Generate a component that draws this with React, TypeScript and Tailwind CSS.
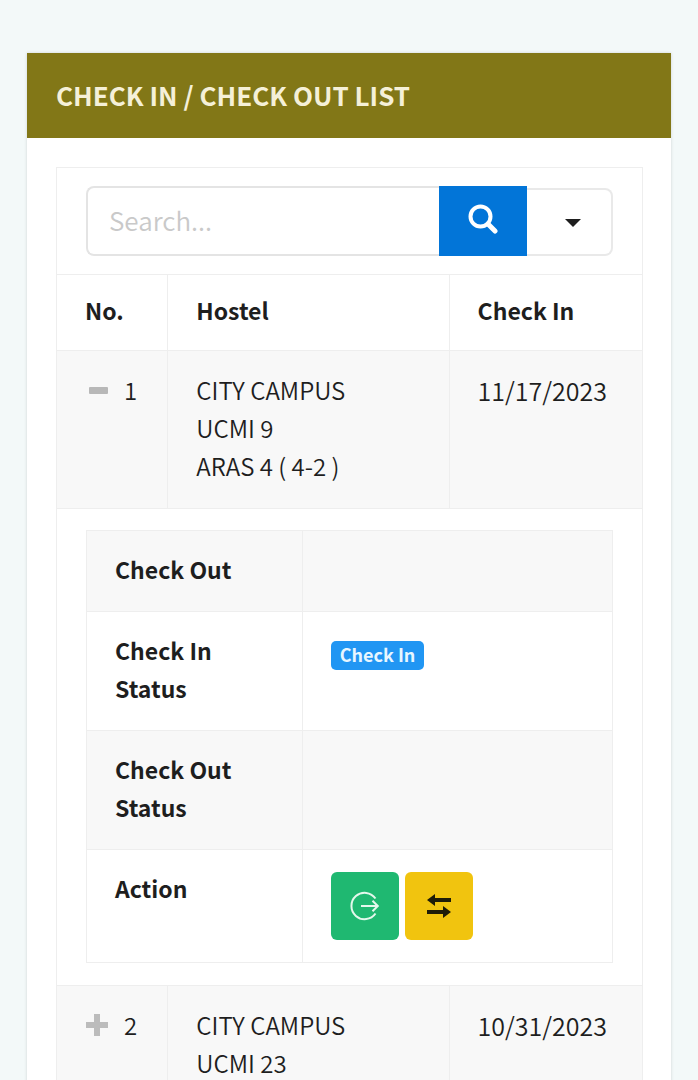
function SearchIcon() {
  return (
    <svg viewBox="0 0 30 30" className="size-[30px]" fill="none" stroke="currentColor" aria-hidden="true">
      <circle cx="12.5" cy="12.5" r="10" strokeWidth="4" />
      <path d="M20 20l7 7" strokeWidth="5" strokeLinecap="round" />
    </svg>
  );
}

function MinusIcon() {
  return (
    <svg viewBox="0 0 24 24" className="size-6 shrink-0" fill="#b8b8b8" aria-hidden="true">
      <rect x="4" y="9" width="19" height="7" rx="1" />
    </svg>
  );
}

function PlusIcon() {
  return (
    <svg viewBox="0 0 24 24" className="size-6 shrink-0" fill="#bcbcbc" aria-hidden="true">
      <path d="M9 1h6v8h8v6h-8v8H9v-8H1V9h8z" />
    </svg>
  );
}

function LeaveIcon() {
  return (
    <svg viewBox="0 0 30 30" className="size-[30px]" fill="none" stroke="#e4f8ec" strokeWidth="2" aria-hidden="true">
      <path d="M25.5 7.5A13.2 13.2 0 1 0 25.5 22.5" />
      <path d="M11 15h17M22.5 9.8l5.3 5.2-5.3 5.2" />
    </svg>
  );
}

function SwapIcon() {
  return (
    <svg viewBox="0 0 24 24" className="size-6" fill="#1f1c08" aria-hidden="true">
      <path d="M0 6l8-6v4h16v4H8v4z" />
      <path d="M24 18l-8-6v4H0v4h16v4z" />
    </svg>
  );
}

const line = "border border-[#eeeeee]";
const cell = "border border-[#eeeeee] px-7 pt-5 pb-[23px] text-left align-top";
const headCell = "border border-[#eeeeee] px-7 pt-4 pb-[21px] text-left text-[23px]";
const detailCell = "border border-[#eeeeee] px-7 py-[21px] text-left align-top";
const detailHead = "border border-[#eeeeee] px-7 pt-[19px] pb-[23px] text-left align-top text-[23px] font-bold";

type Stay = { no: number; lines: string[]; date: string; open: boolean };

function StayRow({ stay }: { stay: Stay }) {
  return (
    <tr className="bg-[#f8f8f8]">
      <td className={cell}>
        <button
          type="button"
          aria-label={stay.open ? "Collapse row" : "Expand row"}
          className="flex h-[38px] items-center gap-[15px]"
        >
          {stay.open ? <MinusIcon /> : <PlusIcon />}
          <span>{stay.no}</span>
        </button>
      </td>
      <td className={cell}>
        {stay.lines.map((text) => (
          <div key={text}>{text}</div>
        ))}
      </td>
      <td className={`${cell} text-[25px]`}>{stay.date}</td>
    </tr>
  );
}

function Details() {
  return (
    <table className="w-full table-fixed border-collapse">
      <colgroup>
        <col className="w-[41%]" />
        <col />
      </colgroup>
      <tbody>
        <tr className="bg-[#f8f8f8]">
          <th scope="row" className={detailHead}>Check Out</th>
          <td className={detailCell} />
        </tr>
        <tr>
          <th scope="row" className={detailHead}>Check In<br />Status</th>
          <td className={detailCell}>
            <span className="mt-2 block h-[29px] w-fit rounded-[5px] bg-[#2196f3] px-[9px] text-[18px] leading-[27px] font-bold text-[#e8f6ff]">
              Check In
            </span>
          </td>
        </tr>
        <tr className="bg-[#f8f8f8]">
          <th scope="row" className={detailHead}>Check Out<br />Status</th>
          <td className={detailCell} />
        </tr>
        <tr>
          <th scope="row" className={detailHead}>Action</th>
          <td className={`${line} px-7 py-[22px] align-top`}>
            <div className="flex gap-1.5">
              <button type="button" aria-label="Check out" className="grid size-[68px] place-items-center rounded-md bg-[#1fb871]">
                <LeaveIcon />
              </button>
              <button type="button" aria-label="Transfer" className="grid size-[68px] place-items-center rounded-md bg-[#f1c40f]">
                <SwapIcon />
              </button>
            </div>
          </td>
        </tr>
      </tbody>
    </table>
  );
}

export default function App() {
  return (
    <main className="h-screen overflow-hidden bg-[#f3f9f9] px-[27px] pt-[53px] font-['Noto_Sans_CJK_JP',sans-serif] text-[#1e1e1e]">
      <section className="min-h-full bg-white shadow-[0_0_3px_rgba(0,0,0,0.15)]">
        <header className="flex h-[85px] items-center bg-[#827717] px-[29px] pb-0.5">
          <h1 className="text-[26px] font-bold text-[#f5f0d8]">CHECK IN / CHECK OUT LIST</h1>
        </header>
        <div className="py-[29px] pr-7 pl-[29px]">
          <table className="w-full table-fixed border-collapse text-[24px] leading-[38px] font-[350]">
            <colgroup>
              <col className="w-[19%]" />
              <col className="w-[48%]" />
              <col className="w-[33%]" />
            </colgroup>
            <thead>
              <tr>
                <td colSpan={3} className={`${line} px-[29px] py-[18px]`}>
                  <form className="flex h-[70px] items-stretch" onSubmit={(event) => event.preventDefault()}>
                    <input
                      type="search"
                      aria-label="Search"
                      placeholder="Search..."
                      className="min-w-0 flex-1 rounded-l-lg border-2 border-r-0 border-[#e4e4e4] px-[21px] pb-0.5 text-[26px] outline-none placeholder:text-[#c9c9c9]"
                    />
                    <button type="submit" aria-label="Search" className="grid w-[88px] place-items-center bg-[#0275d8] pb-1 text-white">
                      <SearchIcon />
                    </button>
                    <button
                      type="button"
                      aria-label="Search options"
                      className="mt-0.5 grid w-[86px] place-items-center rounded-r-lg border-2 border-l-0 border-[#e9e9e9] pt-0.5 pl-2"
                    >
                      <svg viewBox="0 0 16 8" className="h-2 w-4" fill="#1e1e1e" aria-hidden="true">
                        <path d="M0 0h16l-8 8z" />
                      </svg>
                    </button>
                  </form>
                </td>
              </tr>
              <tr className="font-bold">
                <th scope="col" className={headCell}>No.</th>
                <th scope="col" className={headCell}>Hostel</th>
                <th scope="col" className={headCell}>Check In</th>
              </tr>
            </thead>
            <tbody>
              <StayRow stay={{ no: 1, lines: ["CITY CAMPUS", "UCMI 9", "ARAS 4 ( 4-2 )"], date: "11/17/2023", open: true }} />
              <tr>
                <td colSpan={3} className={`${line} px-[29px] pt-[21px] pb-[22px]`}>
                  <Details />
                </td>
              </tr>
              <StayRow stay={{ no: 2, lines: ["CITY CAMPUS", "UCMI 23"], date: "10/31/2023", open: false }} />
            </tbody>
          </table>
        </div>
      </section>
    </main>
  );
}
